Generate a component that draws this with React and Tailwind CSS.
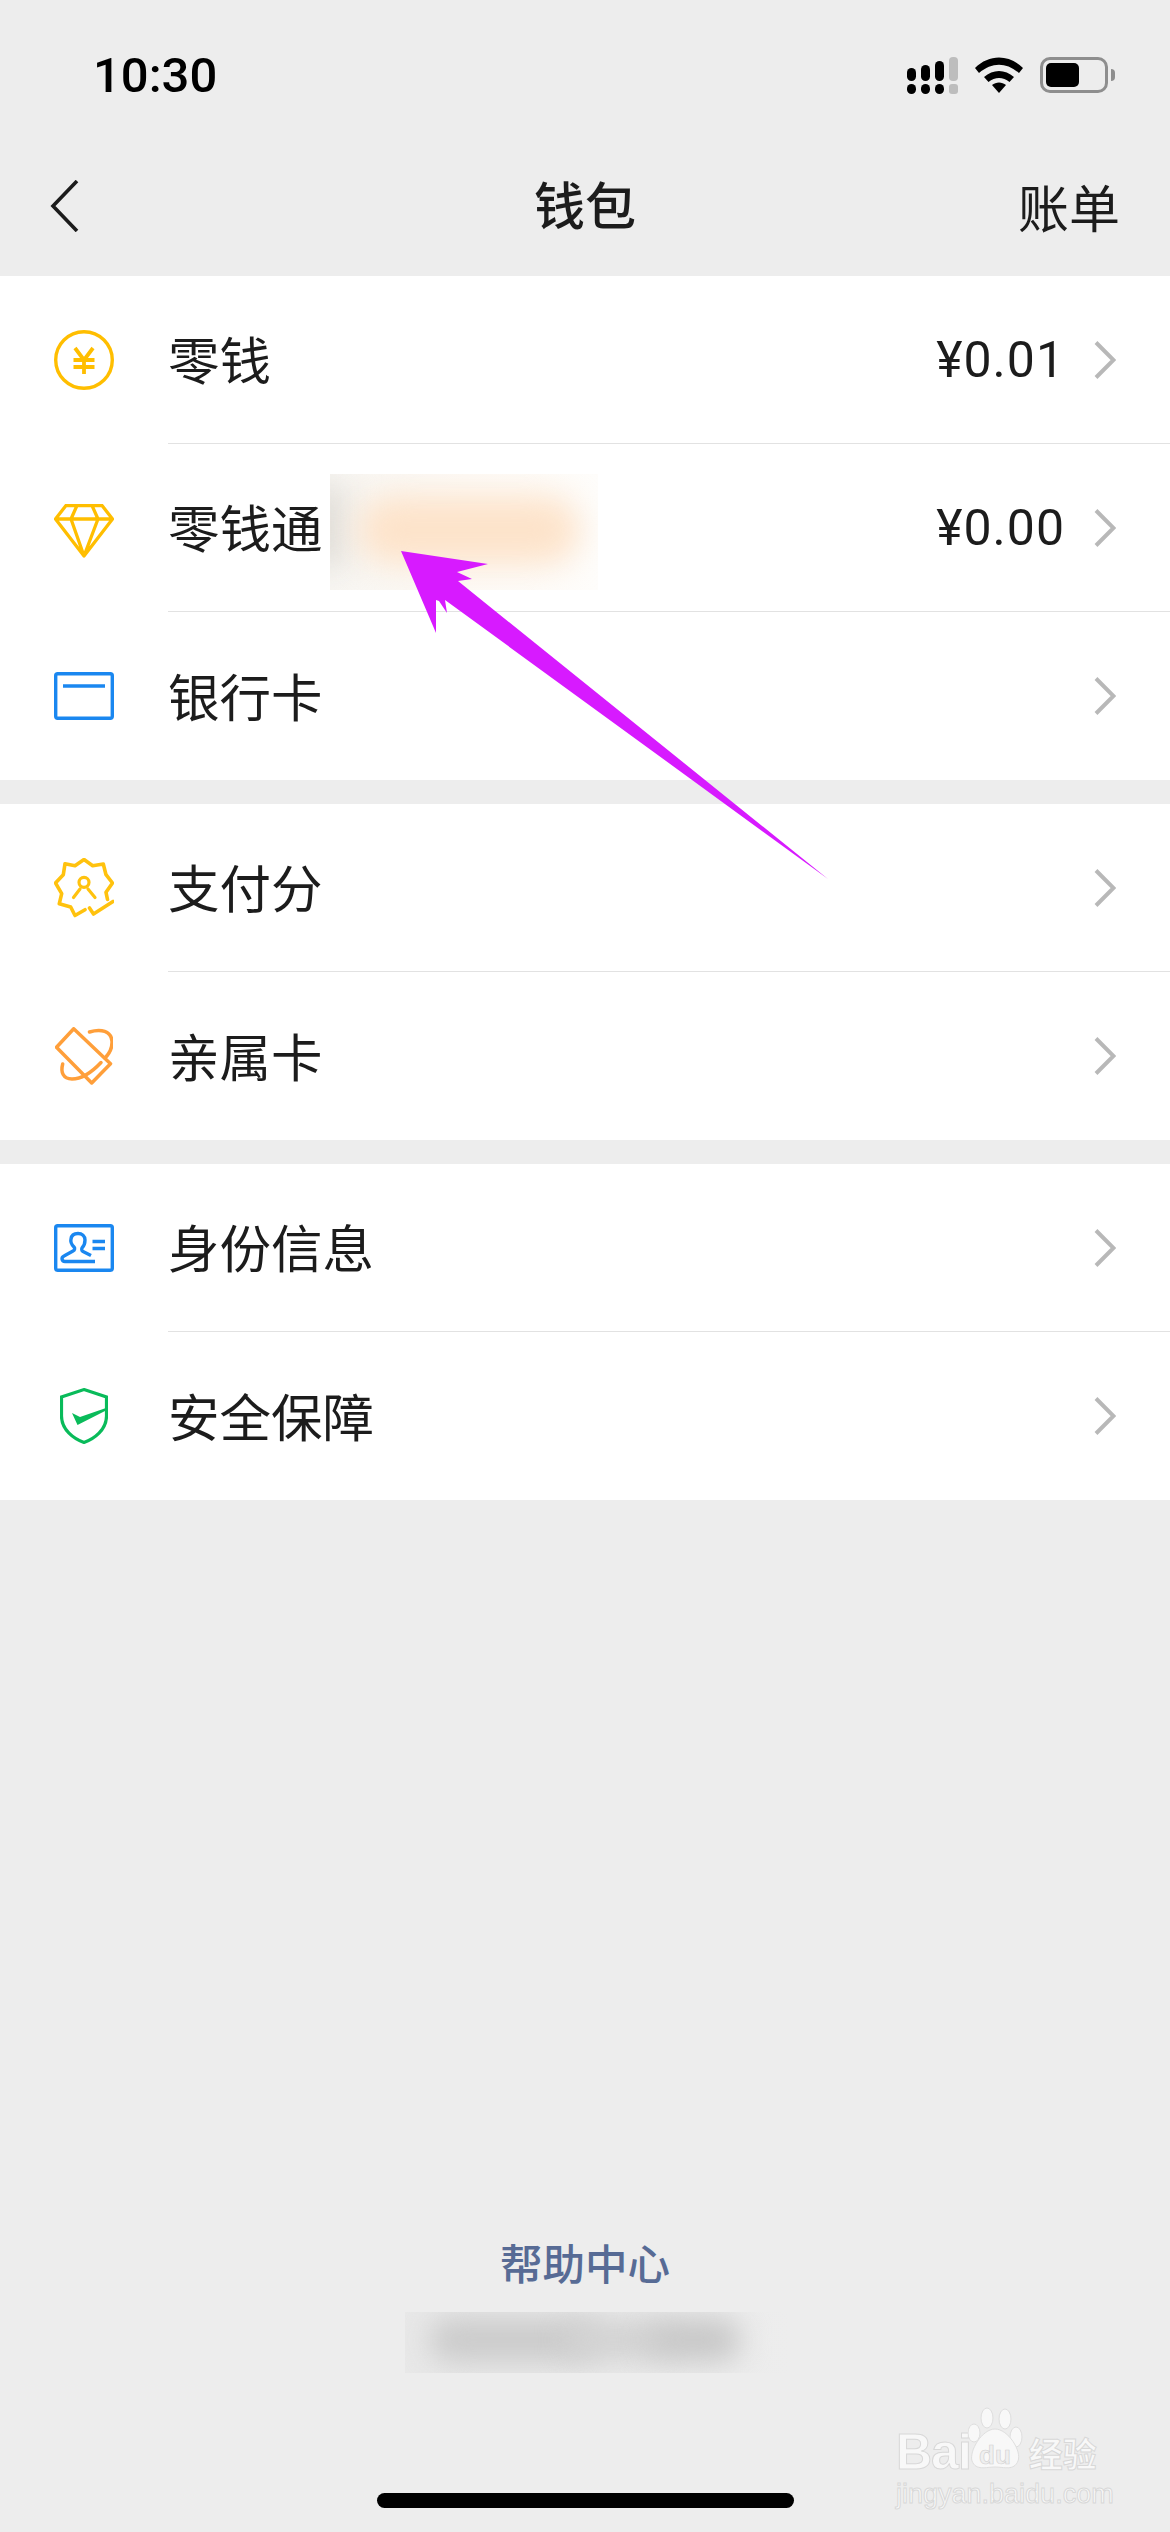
import React from 'react';

const cjk = { fontFamily: '"Noto Sans CJK SC", "Noto Sans", sans-serif' };

const CoinIcon = () => (
  <svg width="60" height="60" viewBox="0 0 60 60" fill="none" stroke="#ffbe00" strokeWidth="3.4">
    <circle cx="30" cy="30" r="28.3" />
    <path d="M21 18 L30 30 L39 18 M19.5 30 H40.5 M19.5 37 H40.5 M30 30 V44" strokeWidth="3.8" />
  </svg>
);

const DiamondIcon = () => (
  <svg width="60" height="54" viewBox="0 0 60 54" fill="none" stroke="#ffbe00" strokeWidth="3.3" strokeLinejoin="round" className="mt-[6px]">
    <path d="M12 1.5 H48 L58.5 15 L30 52 L1.5 15 Z M1.5 15 H58.5 M23 1.5 L17 15 L30 52 L44 15 L38 1.5" />
  </svg>
);

const CardIcon = () => (
  <svg width="60" height="48" viewBox="0 0 60 48" fill="none" stroke="#1a87f0" strokeWidth="3.4">
    <rect x="1.7" y="1.7" width="56.6" height="44.6" rx="2" />
    <path d="M9 14 H51" />
  </svg>
);

const BadgeIcon = () => (
  <svg width="60" height="60" viewBox="0 0 60 60" fill="none" stroke="#ffc20e" strokeWidth="3.6" strokeLinejoin="round" strokeLinecap="round">
    <path d="M53.5 41.5 L52 34.3 L58.5 25 L52 16.7 L49.3 6 L38.7 7.7 L30 1.5 L21 7.7 L11 5.7 L9.3 16.7 L1.5 25 L7.7 35.7 L5.3 45.7 L16.7 49 L21 57.5 L31 51.7" />
    <circle cx="30" cy="24.3" r="5" strokeWidth="3.2" />
    <path d="M26 31 L19.5 39.5 M34 31 L41 39.5" strokeWidth="3.2" />
    <path d="M35.5 50 L39.5 56 L59 43.5" />
  </svg>
);

const HeartCardIcon = () => (
  <svg width="58" height="58" viewBox="0 0 58 58" fill="none" stroke="#ff9f3a" strokeWidth="3.5" strokeLinejoin="round" strokeLinecap="round">
    <path d="M18.7 1.8 L1.5 20.3 L36.7 56 L55.5 36.7 Z" />
    <path d="M34.5 5 C46 1.5 56 4 57 14 C57.5 22 54 27 50 31" />
    <path d="M46 35.5 C38 44 28 52 17 52 C8 52 5.5 45 7.7 37" />
  </svg>
);

const IdIcon = () => (
  <svg width="60" height="48" viewBox="0 0 60 48" fill="none" stroke="#1a87f0" strokeWidth="3.4">
    <rect x="1.7" y="1.7" width="56.6" height="44.6" rx="2" />
    <path d="M41 37.5 H11 C7.5 37.5 7 33.5 10 32 L19 27 C21 26 21 24 20 23 C17 20 16.5 17 17 15 C17.5 11 20 9.5 24 9.5 C28 9.5 31 12 31 16 C31 19 30 22 28 24 C27 26 28 27 30 28 L37 31.5" />
    <path d="M38.5 17.5 H51 M38.5 24.5 H51" />
  </svg>
);

const ShieldIcon = () => (
  <svg width="48" height="56" viewBox="0 0 48 56" fill="none">
    <path d="M24 1.6 L46.5 9 V28 C46.5 42 34 51 24 54.5 C14 51 1.5 42 1.5 28 V9 Z" stroke="#09bb5a" strokeWidth="3.2" />
    <path d="M12 25 L20 29 L46 20 V22.5 L17.5 37 Z" fill="#09bb5a" />
  </svg>
);

const Chevron = () => (
  <svg width="22" height="38" viewBox="0 0 22 38" fill="none" stroke="#b8b8b8" strokeWidth="4">
    <path d="M2 1.5 L19.5 19 L2 36.5" />
  </svg>
);

const Row = ({ icon, label, value, last }) => (
  <div className="flex h-[168px] items-stretch">
    <div className="flex w-[168px] shrink-0 items-center justify-start pl-[54px]">
      <div className="flex w-[60px] justify-center">{icon}</div>
    </div>
    <div className={`flex flex-1 items-center pr-[54px] ${last ? '' : 'border-b border-[#e2e2e2]'}`}>
      <span className="flex-1 pb-[3px] text-[51.5px] leading-none text-[#1c1c1c]" style={cjk}>{label}</span>
      {value && <span className="mr-[29px] font-['Roboto'] text-[50px] leading-none tracking-[1px] text-[#1c1c1c]">{value}</span>}
      <Chevron />
    </div>
  </div>
);

const StatusIcons = () => (
  <div className="flex items-center gap-[17px]">
    <svg width="51" height="37" viewBox="0 0 51 37">
      <rect x="0" y="11" width="9" height="13" rx="4.5" />
      <rect x="14" y="8" width="9" height="16" rx="4.5" />
      <rect x="28" y="4" width="9" height="20" rx="4.5" />
      <rect x="42" y="0" width="9" height="24" rx="4" fill="#bdbdbd" />
      <rect x="0" y="27" width="9" height="10" rx="4.5" />
      <rect x="14" y="27" width="9" height="10" rx="4.5" />
      <rect x="28" y="27" width="9" height="10" rx="4.5" />
      <rect x="42" y="27" width="9" height="10" rx="3" fill="#bdbdbd" />
    </svg>
    <svg width="48" height="36" viewBox="0 0 48 36">
      <path d="M0 11 C14 -3 34 -3 48 11 L44 16 C31 5 17 5 4 16 Z" />
      <path d="M9 20 C18 12 30 12 39 20 L34.5 25 C28 19.5 20 19.5 13.5 25 Z" />
      <path d="M17 28 C21 24.5 27 24.5 31 28 L24 36 Z" />
    </svg>
    <div className="flex items-center gap-[3px]">
      <div className="flex h-[36px] w-[68px] items-center rounded-[10px] border-[3px] border-[#8e8e8e] pl-[3px]">
        <div className="h-[24px] w-[33px] rounded-[5px] bg-black" />
      </div>
      <div className="h-[12px] w-[4px] rounded-r-full bg-[#8e8e8e]" />
    </div>
  </div>
);

const Watermark = () => (
  <div className="absolute left-[896px] top-[2407px] h-[98px] w-[212px] text-[#f8f8f8] [-webkit-text-stroke:1px_#d8d8d8]">
    <div className="flex h-[66px] items-end">
      <span className="font-['Liberation_Sans'] text-[50px] font-bold leading-[42px] tracking-[-1px]">Bai</span>
      <svg width="60" height="66" viewBox="0 0 60 66" className="-ml-[3px]">
        <g fill="#f8f8f8" stroke="#dedede" strokeWidth="1">
          <ellipse cx="19" cy="11" rx="6" ry="10" />
          <ellipse cx="37" cy="12" rx="6" ry="10" />
          <ellipse cx="6" cy="26" rx="6" ry="9" />
          <ellipse cx="48" cy="30" rx="6" ry="10" />
          <path d="M27 22 C40 22 54 44 50 54 C46 64 36 60 27 60 C18 60 8 64 4 54 C1 44 14 22 27 22 Z" />
        </g>
        <text x="27" y="57" textAnchor="middle" fontFamily="Liberation Sans" fontWeight="700" fontSize="26" fill="#efefef" stroke="#d0d0d0" strokeWidth="0.6">du</text>
      </svg>
      <span className="ml-[1px] text-[34px] font-bold leading-[40px]" style={cjk}>经验</span>
    </div>
    <div className="mt-[8px] whitespace-nowrap font-['Liberation_Sans'] text-[27px] leading-[26px]">jingyan.baidu.com</div>
  </div>
);

export default function App() {
  return (
    <div className="relative flex min-h-[2532px] w-[1170px] flex-col overflow-hidden bg-[#ededed]" style={cjk}>
      {/* status bar */}
      <div className="flex h-[150px] items-center justify-between pl-[93px] pr-[55px]">
        <span className="font-['Roboto'] text-[49px] font-medium leading-none text-black">10:30</span>
        <StatusIcons />
      </div>

      {/* nav */}
      <div className="relative flex h-[126px] items-center justify-between pb-[14px] pl-[50px] pr-[50px]">
        <svg width="30" height="52" viewBox="0 0 30 52" fill="none" stroke="#1c1c1c" strokeWidth="3.6">
          <path d="M27 1 L3 26 L27 51" />
        </svg>
        <span className="absolute left-0 right-0 pb-[6px] text-center text-[51px] font-medium leading-none text-[#1c1c1c]">钱包</span>
        <span className="text-[51px] leading-none text-[#1c1c1c]">账单</span>
      </div>

      {/* list */}
      <div className="flex flex-col gap-[24px]">
        <div className="bg-white">
          <Row icon={<CoinIcon />} label="零钱" value="¥0.01" />
          <Row icon={<DiamondIcon />} label="零钱通" value="¥0.00" />
          <Row icon={<CardIcon />} label="银行卡" last />
        </div>
        <div className="bg-white">
          <Row icon={<BadgeIcon />} label="支付分" />
          <Row icon={<HeartCardIcon />} label="亲属卡" last />
        </div>
        <div className="bg-white">
          <Row icon={<IdIcon />} label="身份信息" />
          <Row icon={<ShieldIcon />} label="安全保障" last />
        </div>
      </div>

      {/* footer */}
      <div className="mt-auto flex flex-col items-center pb-[24px]">
        <span className="mb-[2px] text-[42.5px] font-medium leading-none text-[#576b95]">帮助中心</span>
        <div className="mb-[120px] mt-[27px] h-[61px] w-[385px]" />
        <div className="h-[15px] w-[417px] rounded-full bg-black" />
      </div>

      {/* blurred patches */}
      <div className="absolute left-[330px] top-[474px] h-[116px] w-[268px] overflow-hidden bg-gradient-to-r from-[#f8f6f2] via-[#fdfaf6] to-[#fefdfb]">
        <div className="absolute left-[-24px] top-[12px] h-[80px] w-[40px] bg-[#e0ddd8] blur-[16px]" />
        <div className="absolute left-[28px] top-[22px] h-[68px] w-[222px] rounded-full bg-[#fde3ca] blur-[16px]" />
      </div>
      <div className="absolute left-[405px] top-[2312px] h-[61px] w-[385px] overflow-hidden bg-gradient-to-r from-[#e8e8e8] via-[#eaeaea] to-[#ededed]">
        <div className="absolute left-[24px] top-[6px] h-[44px] w-[170px] rounded-full bg-[#cbcbcb] blur-[14px]" />
        <div className="absolute left-[160px] top-[8px] h-[40px] w-[100px] rounded-full bg-[#d2d2d2] blur-[14px]" />
        <div className="absolute left-[240px] top-[6px] h-[44px] w-[96px] rounded-full bg-[#c8c8c8] blur-[14px]" />
      </div>

      {/* annotation arrow */}
      <svg className="absolute left-0 top-0" width="1170" height="900" viewBox="0 0 1170 900">
        <path d="M401 551 L488 564 L457 572 L472 579 L458 581 L828 879 L445 600 L447 613 L439 601 L436 600 L436 633 Z" fill="#d71aff" />
      </svg>

      <Watermark />
    </div>
  );
}
